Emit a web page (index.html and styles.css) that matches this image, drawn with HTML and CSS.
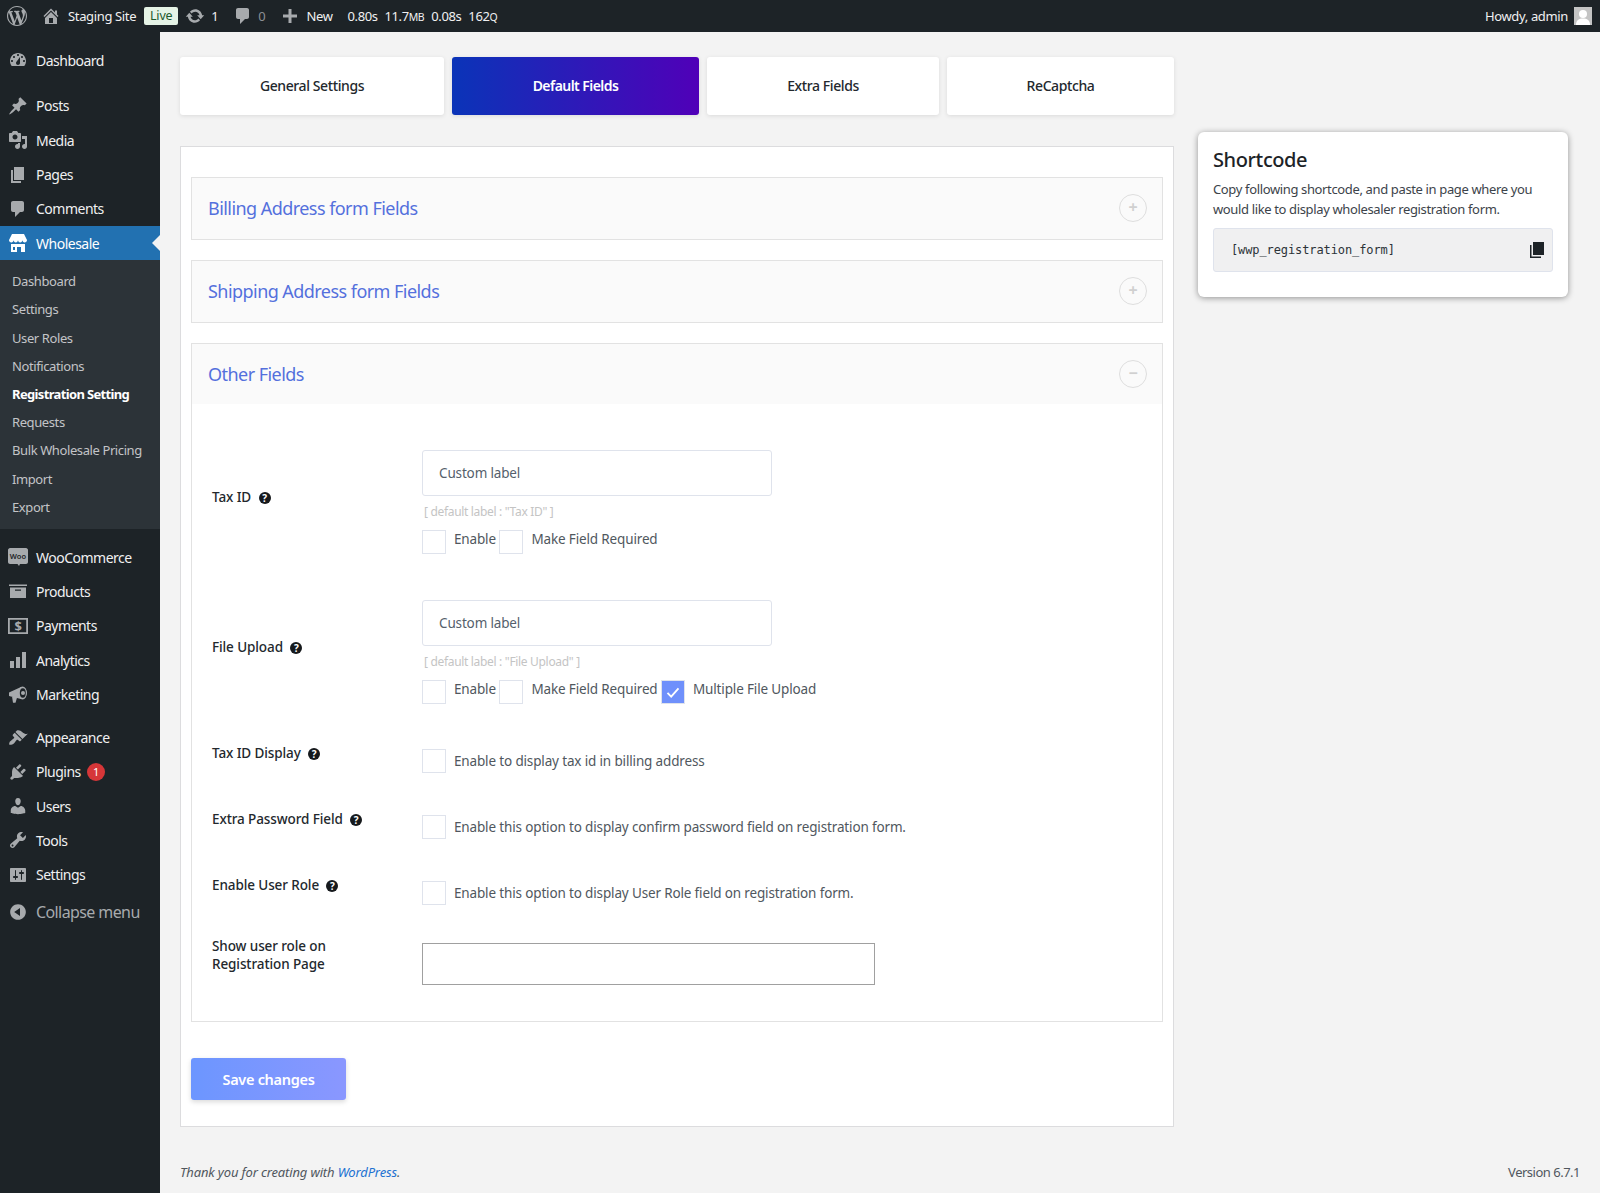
FILE: index.html
```html
<!DOCTYPE html>
<html lang="en">
<head>
    <meta charset="UTF-8" />
    <meta name="viewport" content="width=device-width, initial-scale=1.0" />
    <title>Registration Setting</title>
    <link rel="stylesheet" href="styles.css">
</head>
<body>
    <div class="adminbar">
        <a class="bar-item bar-logo"><svg class="bar-icon logo" viewBox="0 0 20 20"><path d="M20 10c0-5.51-4.49-10-10-10C4.48 0 0 4.49 0 10c0 5.52 4.48 10 10 10 5.51 0 10-4.48 10-10zM7.78 15.37L4.37 6.22c.55-.02 1.17-.08 1.17-.08.5-.06.44-1.13-.06-1.11 0 0-1.45.11-2.37.11-.18 0-.37 0-.58-.01C4.12 2.69 6.87 1.11 10 1.11c2.33 0 4.45.87 6.05 2.34-.68-.11-1.65.39-1.65 1.58 0 .74.45 1.36.9 2.1.35.61.55 1.36.55 2.46 0 1.49-1.4 5-1.4 5l-3.03-8.37c.54-.02.82-.17.82-.17.5-.05.44-1.25-.06-1.22 0 0-1.44.12-2.38.12-.87 0-2.33-.12-2.33-.12-.5-.03-.56 1.2-.06 1.22l.92.08 1.26 3.41zM17.41 10c.24-.64.74-1.87.43-4.25.7 1.29 1.05 2.71 1.05 4.25 0 3.29-1.73 6.24-4.4 7.78.97-2.59 1.94-5.2 2.92-7.78zM6.1 18.09C3.12 16.65 1.11 13.53 1.11 10c0-1.3.23-2.48.72-3.59C3.25 10.3 4.67 14.2 6.1 18.09zm4.03-6.63l2.58 6.98c-.86.29-1.76.45-2.71.45-.79 0-1.57-.11-2.29-.33.81-2.38 1.62-4.74 2.42-7.1z"/></svg></a>
        <a class="bar-item bar-site"><svg class="bar-icon" viewBox="0 0 20 20"><path d="M16 8.5l1.53 1.53-1.06 1.06L10 4.62l-6.47 6.47-1.06-1.06L10 2.5l4 4v-2h2v4zm-6-2.46l6 5.99V18H4v-5.97zM12 17v-5H8v5h4z"/></svg><span>Staging Site</span></a>
        <span class="live">Live</span>
        <a class="bar-item bar-updates"><svg class="bar-icon" viewBox="0 0 20 20"><path d="M10.2 3.28c3.53 0 6.43 2.61 6.92 6h2.08l-3.5 4-3.5-4h2.32c-.45-1.97-2.21-3.45-4.32-3.45-1.45 0-2.73.71-3.54 1.78L4.95 5.66C6.23 4.2 8.11 3.28 10.2 3.28zm-.4 13.44c-3.52 0-6.43-2.61-6.92-6H.8l3.5-4c1.17 1.33 2.33 2.67 3.5 4H5.48c.45 1.97 2.21 3.45 4.32 3.45 1.45 0 2.73-.71 3.54-1.78l1.71 1.95c-1.28 1.46-3.15 2.38-5.25 2.38z"/></svg><span>1</span></a>
        <a class="bar-item bar-comments"><svg class="bar-icon" viewBox="0 0 20 20"><path d="M5 2h9c1.1 0 2 .9 2 2v7c0 1.1-.9 2-2 2h-2l-5 5v-5H5c-1.1 0-2-.9-2-2V4c0-1.1.9-2 2-2z"/></svg><span class="muted">0</span></a>
        <a class="bar-item bar-new"><svg class="bar-icon" viewBox="0 0 20 20"><path d="M17 8.5v3h-5.5V17h-3v-5.5H3v-3h5.5V3h3v5.5z"/></svg><span>New</span></a>
        <div class="bar-stats"><span>0.80s</span><span>11.7<small>MB</small></span><span>0.08s</span><span>162<small>Q</small></span></div>
        <div class="bar-user"><span>Howdy, admin</span>
            <svg class="avatar" viewBox="0 0 18 18"><rect width="18" height="18" fill="#c4c4c4"/><circle cx="9" cy="7" r="4" fill="#fff"/><path d="M2 18c0-5 3-6.500 7-6.500s7 1.500 7 6.500z" fill="#fff"/></svg>
        </div>
    </div>

    <div class="wrap">
        <div class="sidemenu">
            <a class="menu-item"><svg viewBox="0 0 20 20"><path d="M3.760 16h12.480c1.100-1.370 1.760-3.110 1.760-5 0-4.420-3.580-8-8-8s-8 3.580-8 8c0 1.890.66 3.630 1.760 5zM10 4c.55 0 1 .45 1 1s-.45 1-1 1-1-.45-1-1 .45-1 1-1zM6 6c.55 0 1 .45 1 1s-.45 1-1 1-1-.45-1-1 .45-1 1-1zm8 0c.55 0 1 .45 1 1s-.45 1-1 1-1-.45-1-1 .45-1 1-1zm-5.370 5.550L12 7v6c0 1.100-.9 2-2 2s-2-.9-2-2c0-.57.24-1.080.63-1.450zM4 10c.55 0 1 .45 1 1s-.45 1-1 1-1-.45-1-1 .45-1 1-1zm12 0c.55 0 1 .45 1 1s-.45 1-1 1-1-.45-1-1 .45-1 1-1z"/></svg><span>Dashboard</span></a>
            <div class="menu-sep menu-sep-first"></div>
            <a class="menu-item"><svg viewBox="0 0 20 20"><path d="M10.440 3.020l1.820-1.820 6.360 6.350-1.830 1.820c-1.050-.68-2.480-.57-3.410.36l-.75.75c-.92.93-1.040 2.350-.35 3.410l-1.830 1.820-2.410-2.410-2.800 2.790c-.42.42-3.380 2.710-3.800 2.290s1.860-3.390 2.280-3.810l2.790-2.790L4.100 9.360l1.830-1.820c1.050.69 2.480.57 3.400-.36l.75-.75c.93-.92 1.050-2.350.36-3.410z"/></svg><span>Posts</span></a>
            <a class="menu-item"><svg viewBox="0 0 20 20"><path d="M13 11V4c0-.55-.45-1-1-1h-1.670L9 1H5L3.670 3H2c-.55 0-1 .45-1 1v7c0 .55.45 1 1 1h10c.55 0 1-.45 1-1zM7 4.500c1.380 0 2.500 1.120 2.500 2.500S8.380 9.500 7 9.500 4.500 8.380 4.500 7 5.620 4.500 7 4.500zM14 6h5v10.500c0 1.380-1.120 2.500-2.500 2.500S14 17.880 14 16.500s1.120-2.500 2.500-2.500c.17 0 .34.02.5.05V9h-3V6zm-4 8.050V13h2v3.500c0 1.380-1.120 2.500-2.500 2.500S7 17.880 7 16.500 8.120 14 9.500 14c.17 0 .34.02.5.05z"/></svg><span>Media</span></a>
            <a class="menu-item"><svg viewBox="0 0 20 20"><path d="M6 15V2h10v13H6zm-1 1h8v2H3V5h2v11z"/></svg><span>Pages</span></a>
            <a class="menu-item"><svg viewBox="0 0 20 20"><path d="M5 2h9c1.100 0 2 .9 2 2v7c0 1.100-.9 2-2 2h-2l-5 5v-5H5c-1.100 0-2-.9-2-2V4c0-1.100.9-2 2-2z"/></svg><span>Comments</span></a>
            <a class="menu-item current"><svg viewBox="0 0 20 20"><path d="M4 1h12l3 6c0 1.500-1 2.400-2.300 2.400S14.400 8.500 14.400 7c0 1.500-1 2.400-2.200 2.400S10 8.500 10 7c0 1.500-1 2.400-2.200 2.400S5.600 8.500 5.600 7c0 1.500-1 2.400-2.300 2.400S1 8.500 1 7zM3 11h14v8h-4v-5H9v5H3zm2 3v3h2v-3z"/></svg><span>Wholesale</span></a>
            <div class="submenu">
                <a>Dashboard</a>
                <a>Settings</a>
                <a>User Roles</a>
                <a>Notifications</a>
                <a class="on">Registration Setting</a>
                <a>Requests</a>
                <a>Bulk Wholesale Pricing</a>
                <a>Import</a>
                <a>Export</a>
            </div>
            <a class="menu-item woo"><svg viewBox="0 0 20 20"><path d="M2 1h16c1 0 2 1 2 2v12c0 1-1 2-2 2h-6l-1 2-1.500-2H2c-1 0-2-1-2-2V3c0-1 1-2 2-2z"/><text x="10" y="11.500" text-anchor="middle" class="woo-text">Woo</text></svg><span>WooCommerce</span></a>
            <a class="menu-item"><svg viewBox="0 0 20 20"><path d="M1 3.500h18v1.500H1zM2 6.500h16v10.500H2zm5 2v1.300h6V8.500z" fill-rule="evenodd"/></svg><span>Products</span></a>
            <a class="menu-item"><svg viewBox="0 0 20 20"><path d="M0 2h20v16H0zm1.800 1.800v12.400h16.400V3.800z" fill-rule="evenodd"/><text x="10" y="14.800" text-anchor="middle" class="pay-text">$</text></svg><span>Payments</span></a>
            <a class="menu-item"><svg viewBox="0 0 20 20"><path d="M2 11h4v7H2zM8 7h4v11H8zM14 2h4v16h-4z"/></svg><span>Analytics</span></a>
            <a class="menu-item"><svg viewBox="0 0 20 20"><path d="M1 8.500L13 3v12L1 12zM4 12.500l5 1.300-1.500 5H5z"/><ellipse cx="14.500" cy="9" rx="4.500" ry="6.500"/><ellipse cx="14.800" cy="9" rx="3" ry="4.800" fill="#1d2327"/><circle cx="15" cy="9" r="2"/></svg><span>Marketing</span></a>
            <div class="menu-sep"></div>
            <a class="menu-item"><svg viewBox="0 0 20 20"><path d="M14.480 11.060L7.410 3.990l1.500-1.500c.5-.56 2.300-.47 3.510.32 1.210.8 1.430 1.280 2.910 2.100 1.180.64 2.450 1.260 4.450.85zm-.71.71L6.700 4.700 4.930 6.470c-.39.39-.39 1.020 0 1.410l1.060 1.060c.39.39.39 1.030 0 1.420-.6.6-1.430 1.110-2.210 1.690-.35.26-.7.53-1.010.84C1.430 13.230.91 15.700 1.300 16.700c1.020.38 3.470-.14 4.800-1.470.31-.31.58-.66.85-1.020.57-.78 1.080-1.610 1.690-2.210.39-.39 1.020-.39 1.410 0l1.060 1.060c.39.39 1.020.39 1.410 0z"/></svg><span>Appearance</span></a>
            <a class="menu-item"><svg viewBox="0 0 20 20"><path d="M13.110 4.360L9.870 7.600 8 5.730l3.240-3.240c.35-.34 1.050-.2 1.560.32.52.51.66 1.210.31 1.550zm-8 1.770l.91-1.120 9.010 9.010-1.190.84c-.71.71-2.630 1.160-3.820 1.160H6.140L4.900 17.260c-.59.59-1.540.59-2.120 0-.59-.58-.59-1.530 0-2.120l1.240-1.240v-3.880c0-1.130.4-3.190 1.090-3.890zm7.260 3.970l3.240-3.240c.34-.35 1.040-.21 1.550.31.52.51.66 1.210.31 1.550l-3.240 3.250z"/></svg><span>Plugins</span><b class="badge">1</b></a>
            <a class="menu-item"><svg viewBox="0 0 20 20"><path d="M10 9.250c-2.270 0-2.730-3.440-2.730-3.440C7 4.020 7.820 2 9.970 2c2.160 0 2.980 2.020 2.710 3.810 0 0-.41 3.440-2.680 3.440zm0 2.570L12.720 10c2.390 0 4.520 2.330 4.520 4.530v2.490s-3.650 1.130-7.240 1.130c-3.650 0-7.240-1.130-7.240-1.130v-2.490c0-2.250 1.940-4.480 4.470-4.480z"/></svg><span>Users</span></a>
            <a class="menu-item"><svg viewBox="0 0 20 20"><path d="M16.680 9.770c-1.340 1.340-3.300 1.670-4.950.99l-5.410 6.520c-.99.99-2.590.99-3.580 0s-.99-2.590 0-3.570l6.520-5.420c-.68-1.650-.35-3.610.99-4.950 1.280-1.280 3.120-1.620 4.720-1.060l-2.890 2.890 2.820 2.820 2.860-2.870c.53 1.580.18 3.390-1.080 4.650zM3.810 16.210c.4.39 1.040.39 1.430 0 .4-.4.4-1.040 0-1.430-.39-.4-1.030-.4-1.430 0-.39.39-.39 1.030 0 1.430z"/></svg><span>Tools</span></a>
            <a class="menu-item"><svg viewBox="0 0 20 20"><path d="M18 16V4c0-.55-.45-1-1-1H3c-.55 0-1 .45-1 1v12c0 .55.45 1 1 1h14c.55 0 1-.45 1-1zM8 11h1c.55 0 1 .45 1 1s-.45 1-1 1H8v1.500c0 .28-.22.5-.5.5s-.5-.22-.5-.5V13H6c-.55 0-1-.45-1-1s.45-1 1-1h1V5.500c0-.28.22-.5.5-.5s.5.22.5.5V11zm5-2h-1c-.55 0-1-.45-1-1s.45-1 1-1h1V5.500c0-.28.22-.5.5-.5s.5.22.5.5V7h1c.55 0 1 .45 1 1s-.45 1-1 1h-1v5.500c0 .28-.22.5-.5.5s-.5-.22-.5-.5V9z"/></svg><span>Settings</span></a>
            <a class="menu-item collapse"><svg viewBox="0 0 20 20"><path d="M10 2.160c4.330 0 7.840 3.510 7.840 7.840s-3.510 7.840-7.840 7.840S2.160 14.330 2.160 10 5.710 2.160 10 2.160zm2 11.720V6.120L6.180 9.970z"/></svg><span>Collapse menu</span></a>
        </div>

        <div class="content">
            <div class="columns">
                <div class="main-col">
                    <div class="tabs">
                        <a class="tab tab-general">General Settings</a>
                        <a class="tab tab-default active">Default Fields</a>
                        <a class="tab tab-extra">Extra Fields</a>
                        <a class="tab tab-captcha">ReCaptcha</a>
                    </div>
                    <div class="panel">
                        <div class="accordion">
                            <div class="acc-head"><h3>Billing Address form Fields</h3><span class="acc-toggle">+</span></div>
                        </div>
                        <div class="accordion">
                            <div class="acc-head"><h3>Shipping Address form Fields</h3><span class="acc-toggle">+</span></div>
                        </div>
                        <div class="accordion">
                            <div class="acc-head open"><h3>Other Fields</h3><span class="acc-toggle">&minus;</span></div>
                            <div class="acc-body">
                                <div class="row row-field">
                                    <div class="row-label">Tax ID <i class="help">?</i></div>
                                    <div>
                                        <div class="text-input">Custom label</div>
                                        <p class="hint">[ default label : "Tax ID" ]</p>
                                        <div class="checks">
                                            <label class="check"><span class="box"></span>Enable</label>
                                            <label class="check"><span class="box"></span>Make Field Required</label>
                                        </div>
                                    </div>
                                </div>
                                <div class="row row-field">
                                    <div class="row-label">File Upload <i class="help">?</i></div>
                                    <div>
                                        <div class="text-input">Custom label</div>
                                        <p class="hint">[ default label : "File Upload" ]</p>
                                        <div class="checks">
                                            <label class="check"><span class="box"></span>Enable</label>
                                            <label class="check"><span class="box"></span>Make Field Required</label>
                                            <label class="check"><span class="box checked"><svg viewBox="0 0 24 24"><path d="M6 13l4 4 8-9" fill="none" stroke="#fff" stroke-width="2"/></svg></span>Multiple File Upload</label>
                                        </div>
                                    </div>
                                </div>
                                <div class="row row-single">
                                    <div class="row-label">Tax ID Display <i class="help">?</i></div>
                                    <label class="check"><span class="box"></span>Enable to display tax id in billing address</label>
                                </div>
                                <div class="row row-single">
                                    <div class="row-label">Extra Password Field <i class="help">?</i></div>
                                    <label class="check"><span class="box"></span>Enable this option to display confirm password field on registration form.</label>
                                </div>
                                <div class="row row-single">
                                    <div class="row-label">Enable User Role <i class="help">?</i></div>
                                    <label class="check"><span class="box"></span>Enable this option to display User Role field on registration form.</label>
                                </div>
                                <div class="row row-roles">
                                    <div class="row-label">Show user role on<br>Registration Page</div>
                                    <div class="role-select"></div>
                                </div>
                            </div>
                        </div>
                        <a class="save">Save changes</a>
                    </div>
                </div>
                <div class="side-col">
                    <div class="shortcode">
                        <h2>Shortcode</h2>
                        <p>Copy following shortcode, and paste in page where you would like to display wholesaler registration form.</p>
                        <div class="code">
                            <code>[wwp_registration_form]</code>
                            <svg viewBox="0 0 14 16"><path d="M3 0h11v13H3z"/><path d="M0 3h1.500v11.500H11V16H0z"/></svg>
                        </div>
                    </div>
                </div>
            </div>
            <div class="footer">
                <em>Thank you for creating with <a>WordPress</a>.</em>
                <span class="version">Version 6.7.1</span>
            </div>
        </div>
    </div>
</body>
</html>
```

FILE: styles.css
```css
html, body {
    margin: 0;
    padding: 0;
}
body {
    background: #f3f3f3;
    font-family: "Noto Sans", sans-serif;
    font-size: 14px;
    color: #3c434a;
    letter-spacing: -0.2px;
}
a {
    text-decoration: none;
}

/* top bar */
.adminbar {
    height: 32px;
    background: #1d2327;
    color: #f0f0f1;
    display: flex;
    align-items: center;
    font-size: 13px;
    letter-spacing: -0.35px;
}
.bar-icon {
    width: 20px;
    height: 20px;
    fill: #a7aaad;
    flex: none;
}
.bar-item {
    display: flex;
    align-items: center;
}
.bar-logo {
    margin-left: 7px;
}
.bar-site {
    margin-left: 15px;
    gap: 7px;
}
.bar-site .bar-icon {
    margin-left: -1px;
}
.live {
    margin-left: 8px;
    width: 34px;
    height: 18px;
    line-height: 18px;
    text-align: center;
    background: #e5f3e6;
    color: #1d5a2c;
    border-radius: 2px;
    font-size: 12.500px;
    letter-spacing: -0.2px;
}
.bar-updates {
    margin-left: 7px;
    gap: 6px;
}
.bar-comments {
    margin-left: 15px;
    gap: 5px;
}
.muted {
    color: #8c8f94;
}
.bar-new {
    margin-left: 15px;
    gap: 6px;
}
.bar-stats {
    margin-left: 15px;
    display: flex;
    gap: 7px;
    letter-spacing: -0.4px;
}
.bar-stats small {
    font-size: 10.500px;
}
.bar-user {
    margin-left: auto;
    display: flex;
    align-items: center;
    gap: 6px;
    padding-right: 8px;
}
.avatar {
    width: 18px;
    height: 18px;
}

/* left menu */
.wrap {
    display: flex;
    min-height: 1161px;
}
.sidemenu {
    width: 160px;
    flex: none;
    background: #1d2327;
    padding-top: 11px;
    box-sizing: border-box;
    letter-spacing: -0.5px;
}
.menu-item {
    height: 34.300px;
    display: flex;
    align-items: center;
    color: #f0f0f1;
    position: relative;
}
.menu-item svg {
    width: 20px;
    height: 20px;
    fill: #a7aaad;
    margin-left: 8px;
    margin-right: 8px;
    flex: none;
}
.menu-item.current {
    background: #2271b1;
    color: #fff;
}
.menu-item.current svg {
    fill: #fff;
}
.menu-item.current::after {
    content: "";
    position: absolute;
    right: 0;
    top: 50%;
    margin-top: -8px;
    border: 8px solid transparent;
    border-right-color: #f3f3f3;
    border-left: 0;
}
.menu-sep {
    height: 9px;
}
.menu-sep-first {
    height: 11.500px;
}
.submenu {
    background: #2c3338;
    padding: 7px 0 8.500px;
    margin-bottom: 10.500px;
}
.submenu a {
    display: block;
    height: 28.200px;
    line-height: 28.200px;
    padding-left: 12px;
    font-size: 13px;
    color: #c3c4c7;
    letter-spacing: -0.4px;
}
.submenu a.on {
    color: #fff;
    font-weight: 700;
    letter-spacing: -0.65px;
}
.woo-text {
    font-size: 7.500px;
    font-weight: 600;
    letter-spacing: 0;
    fill: #1d2327;
}
.pay-text {
    font-size: 13px;
    font-weight: 700;
}
.badge {
    margin-left: 6px;
    width: 18px;
    height: 18px;
    line-height: 18px;
    border-radius: 50%;
    background: #d63638;
    color: #fff;
    font-size: 11px;
    font-weight: 400;
    text-align: center;
}
.collapse {
    margin-top: 3px;
    font-size: 16px;
    color: #a7aaad;
    letter-spacing: -0.6px;
}

/* content */
.content {
    flex: 1;
    padding-left: 20px;
    display: flex;
    flex-direction: column;
}
.columns {
    display: flex;
    gap: 24px;
    align-items: flex-start;
}
.main-col {
    width: 994px;
    flex: none;
}
.tabs {
    display: flex;
    gap: 8px;
    margin-top: 25px;
    margin-bottom: 31px;
}
.tab {
    height: 58px;
    line-height: 58px;
    text-align: center;
    background: #fff;
    color: #23282d;
    border-radius: 3px;
    font-weight: 500;
    letter-spacing: -0.4px;
    box-shadow: 0 1px 4px rgba(0, 0, 0, 0.1);
}
.tab-general {
    width: 264px;
}
.tab-default {
    width: 247px;
}
.tab-extra {
    width: 232px;
}
.tab-captcha {
    width: 227px;
}
.tab.active {
    background: linear-gradient(90deg, #0a34b8, #5000b8);
    color: #fff;
    font-weight: 600;
    letter-spacing: -0.55px;
}
.panel {
    background: #fff;
    border: 1px solid #dcdcde;
    padding: 30px 10px 26px;
    height: 981px;
    box-sizing: border-box;
}
.accordion {
    border: 1px solid #e2e2e2;
    margin-bottom: 20px;
}
.acc-head {
    height: 61px;
    background: #fafafa;
    display: flex;
    align-items: center;
    justify-content: space-between;
    padding: 0 15px 0 16px;
}
.acc-head.open {
    height: 60px;
}
.acc-head h3 {
    margin: 0 0 2px;
    font-size: 18px;
    font-weight: 400;
    color: #5470dd;
    letter-spacing: -0.55px;
}
.acc-toggle {
    width: 26px;
    height: 26px;
    margin-bottom: 1px;
    border: 1px solid #dedede;
    border-radius: 50%;
    color: #d0d0d0;
    font-size: 16px;
    font-weight: 700;
    line-height: 25px;
    text-align: center;
}
.acc-head.open h3,
.acc-head.open .acc-toggle {
    margin-bottom: 0;
}
.acc-body {
    padding: 46px 0 36px 20px;
}
.row {
    display: grid;
    grid-template-columns: 210px 1fr;
}
.row-label {
    color: #23282d;
    font-weight: 500;
    letter-spacing: -0.1px;
    font-size: 13.500px;
    line-height: 18px;
}
.row-field {
    align-items: center;
    margin-bottom: 46px;
}
.row-field .row-label {
    padding-bottom: 10px;
}
.row-single {
    margin-bottom: 42px;
}
.row-single:nth-child(3) {
    margin-top: -1px;
}
.row-single .row-label {
    margin-top: -5px;
}
.row-single .check {
    align-items: center;
}
.row-roles {
    margin-top: -4px;
}
.row-roles .row-label {
    margin-top: -6px;
}
.help {
    display: inline-block;
    width: 12px;
    height: 12px;
    line-height: 12px;
    margin-left: 4px;
    border-radius: 50%;
    background: #16191c;
    color: #fff;
    font-size: 10px;
    font-weight: 700;
    font-style: normal;
    letter-spacing: 0;
    text-align: center;
    vertical-align: 0;
}
.text-input {
    width: 350px;
    height: 46px;
    box-sizing: border-box;
    border: 1px solid #dfe3ec;
    border-radius: 3px;
    padding-left: 16px;
    line-height: 44px;
    color: #555f6c;
    font-size: 13.500px;
    letter-spacing: -0.15px;
}
.hint {
    margin: 8px 0 11px 2px;
    font-size: 12px;
    line-height: 15px;
    letter-spacing: -0.32px;
    color: #c4c4c4;
}
.checks {
    display: flex;
    gap: 3.500px;
}
.check {
    display: flex;
    gap: 8px;
    color: #50575e;
    font-size: 13.500px;
    line-height: 18px;
    letter-spacing: -0.15px;
}
.box {
    width: 24px;
    height: 24px;
    box-sizing: border-box;
    border: 1px solid #dfe3ec;
    background: #fff;
    flex: none;
}
.box.checked {
    background: #6f90fb;
}
.box svg {
    display: block;
    width: 22px;
    height: 22px;
}
.role-select {
    width: 453px;
    height: 42px;
    box-sizing: border-box;
    border: 1px solid #a0a0a0;
    background: #fff;
}
.save {
    display: block;
    width: 155px;
    height: 42px;
    margin-top: 36px;
    line-height: 42px;
    text-align: center;
    border-radius: 3px;
    background: linear-gradient(90deg, #6c96ff, #8a97ff);
    color: #fff;
    font-size: 14.500px;
    font-weight: 600;
    letter-spacing: -0.3px;
    box-shadow: 0 2px 5px rgba(0, 0, 0, 0.15);
}

/* shortcode card */
.side-col {
    width: 370px;
    flex: none;
    padding-top: 100px;
}
.shortcode {
    background: #fff;
    border-radius: 6px;
    padding: 14px 15px 25px 15px;
    box-shadow: 0 1px 6px rgba(0, 0, 0, 0.4);
}
.shortcode h2 {
    margin: 0 0 5px;
    font-size: 20px;
    line-height: 28px;
    font-weight: 500;
    letter-spacing: -0.4px;
    color: #1d2327;
}
.shortcode p {
    margin: 0 0 9px;
    font-size: 13px;
    line-height: 20px;
    letter-spacing: -0.36px;
    color: #3c434a;
}
.code {
    height: 44px;
    box-sizing: border-box;
    background: #f0f0f1;
    border: 1px solid #dfe3ec;
    border-radius: 3px;
    display: flex;
    align-items: center;
    justify-content: space-between;
    padding: 0 8px 0 17px;
}
.code code {
    font-family: "DejaVu Sans Mono", monospace;
    font-size: 12px;
    letter-spacing: -0.1px;
    color: #2c3338;
}
.code svg {
    width: 14px;
    height: 16px;
    fill: #1d2327;
}

/* footer */
.footer {
    margin-top: auto;
    display: flex;
    justify-content: space-between;
    padding: 0 20px 12px 0;
    font-size: 13px;
    letter-spacing: -0.15px;
    color: #50575e;
}
.footer a {
    color: #2271d1;
}
.version {
    letter-spacing: -0.5px;
}
```
